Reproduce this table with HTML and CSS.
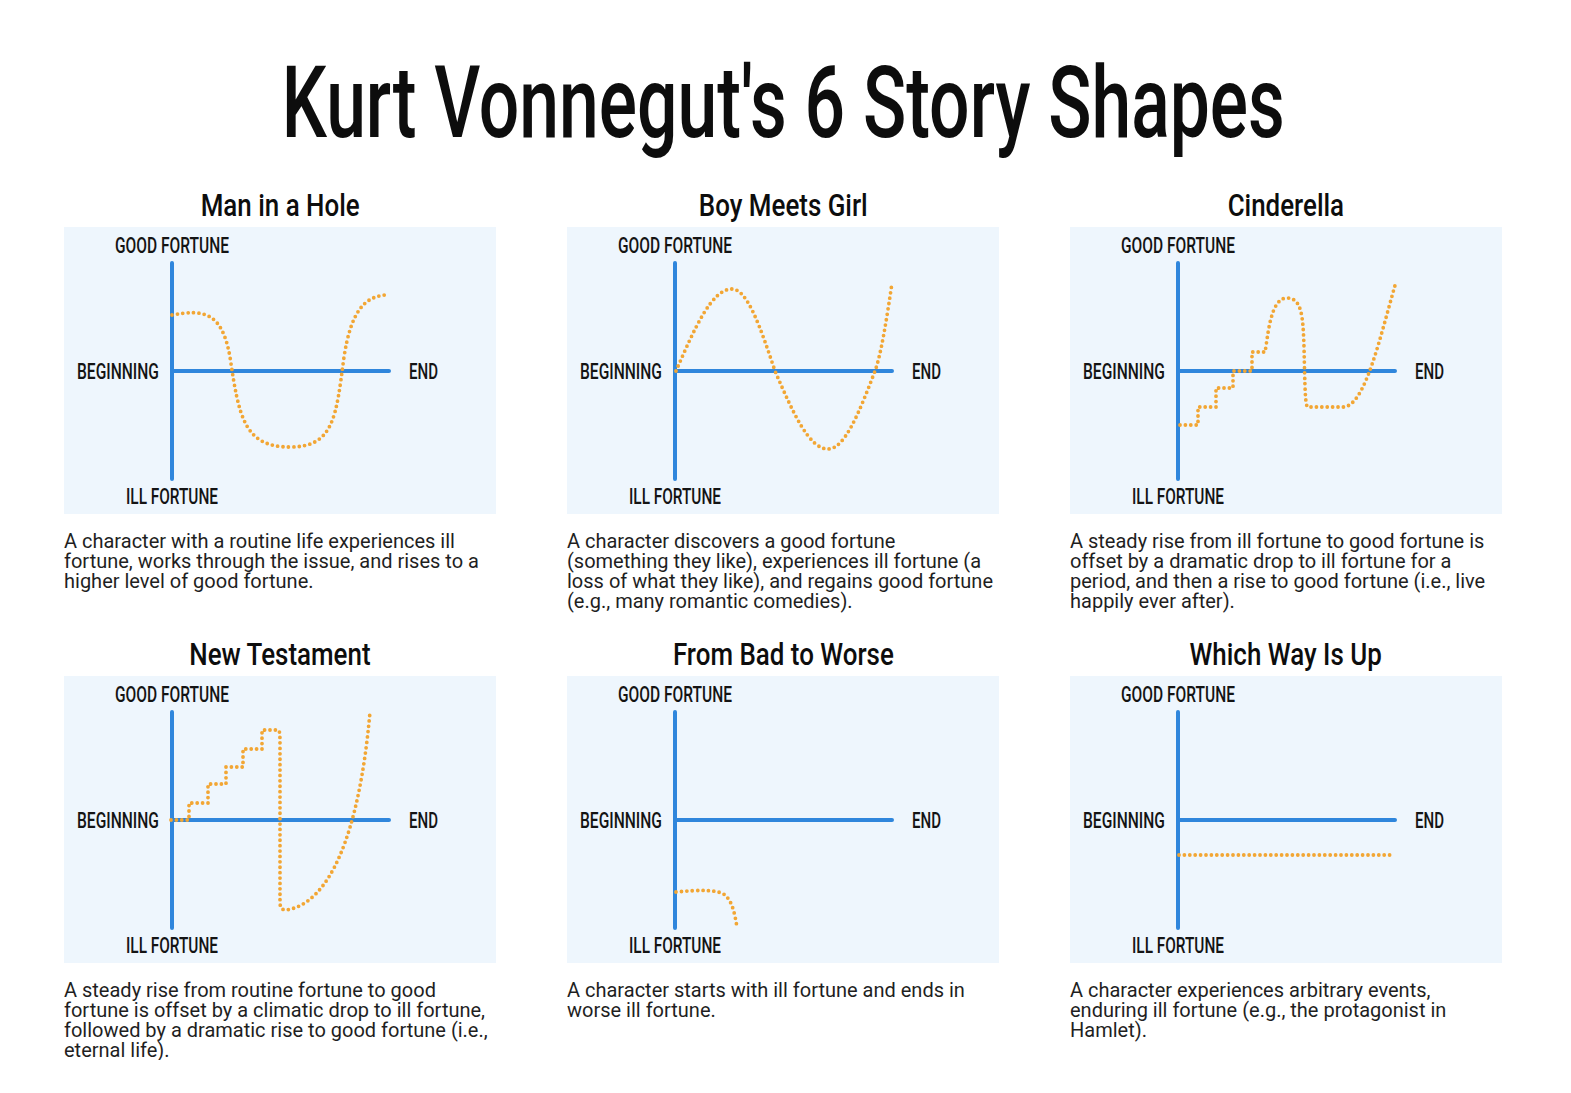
FILE: index.html
```html
<!DOCTYPE html>
<html lang="en">
<head>
<meta charset="utf-8">
<title>Kurt Vonnegut's 6 Story Shapes</title>
<link rel="stylesheet" href="styles.css">
</head>
<body>
<main class="page">
  <h1 class="title"><span>Kurt Vonnegut's 6 Story Shapes</span></h1>
  <section class="grid">

    <article class="card">
      <h2 class="card-title"><span>Man in a Hole</span></h2>
      <div class="chart">
        <svg width="432" height="287" viewBox="0 0 432 287">
          <text class="lbl" x="51" y="26" textLength="114" lengthAdjust="spacingAndGlyphs">GOOD FORTUNE</text>
          <text class="lbl" x="13" y="152" textLength="82" lengthAdjust="spacingAndGlyphs">BEGINNING</text>
          <text class="lbl" x="345" y="152" textLength="29" lengthAdjust="spacingAndGlyphs">END</text>
          <text class="lbl" x="62" y="277" textLength="92" lengthAdjust="spacingAndGlyphs">ILL FORTUNE</text>
          <path class="axis" d="M108,36 V252 M108,144 H325"/>
          <path class="curve" d="M108,88 C140,82 158,85 166,130 C175,190 180,220 226,220 C270,220 272,190 280,130 C287,85 300,70 321,68"/>
        </svg>
      </div>
      <p class="desc">A character with a routine life experiences ill fortune, works through the issue, and rises to a higher level of good fortune.</p>
    </article>

    <article class="card">
      <h2 class="card-title"><span>Boy Meets Girl</span></h2>
      <div class="chart">
        <svg width="432" height="287" viewBox="0 0 432 287">
          <text class="lbl" x="51" y="26" textLength="114" lengthAdjust="spacingAndGlyphs">GOOD FORTUNE</text>
          <text class="lbl" x="13" y="152" textLength="82" lengthAdjust="spacingAndGlyphs">BEGINNING</text>
          <text class="lbl" x="345" y="152" textLength="29" lengthAdjust="spacingAndGlyphs">END</text>
          <text class="lbl" x="62" y="277" textLength="92" lengthAdjust="spacingAndGlyphs">ILL FORTUNE</text>
          <path class="axis" d="M108,36 V252 M108,144 H325"/>
          <path class="curve" d="M109,144 C127.7,100.9 144.8,62 165,62 C180.5,62 193.6,100.9 208,144 C225.7,185 241.9,222 261,222 C277.9,222 292.3,185 308,144 C314,128 320,90 325,56"/>
        </svg>
      </div>
      <p class="desc">A character discovers a good fortune (something they like), experiences ill fortune (a loss of what they like), and regains good fortune (e.g., many romantic comedies).</p>
    </article>

    <article class="card">
      <h2 class="card-title"><span>Cinderella</span></h2>
      <div class="chart">
        <svg width="432" height="287" viewBox="0 0 432 287">
          <text class="lbl" x="51" y="26" textLength="114" lengthAdjust="spacingAndGlyphs">GOOD FORTUNE</text>
          <text class="lbl" x="13" y="152" textLength="82" lengthAdjust="spacingAndGlyphs">BEGINNING</text>
          <text class="lbl" x="345" y="152" textLength="29" lengthAdjust="spacingAndGlyphs">END</text>
          <text class="lbl" x="62" y="277" textLength="92" lengthAdjust="spacingAndGlyphs">ILL FORTUNE</text>
          <path class="axis" d="M108,36 V252 M108,144 H325"/>
          <path class="curve" d="M110,198 H128 V180 H146 V161 H163 V144 H182 V125 H195 C198,110 200,71 217,71 C232,71 233,90 234,120 C235,160 235,180 238,180 H273 C295,180 310,110 326,55"/>
        </svg>
      </div>
      <p class="desc">A steady rise from ill fortune to good fortune is offset by a dramatic drop to ill fortune for a period, and then a rise to good fortune (i.e., live happily ever after).</p>
    </article>

    <article class="card">
      <h2 class="card-title"><span>New Testament</span></h2>
      <div class="chart">
        <svg width="432" height="287" viewBox="0 0 432 287">
          <text class="lbl" x="51" y="26" textLength="114" lengthAdjust="spacingAndGlyphs">GOOD FORTUNE</text>
          <text class="lbl" x="13" y="152" textLength="82" lengthAdjust="spacingAndGlyphs">BEGINNING</text>
          <text class="lbl" x="345" y="152" textLength="29" lengthAdjust="spacingAndGlyphs">END</text>
          <text class="lbl" x="62" y="277" textLength="92" lengthAdjust="spacingAndGlyphs">ILL FORTUNE</text>
          <path class="axis" d="M108,36 V252 M108,144 H325"/>
          <path class="curve" d="M107,144 H125 V127 H144 V108 H162 V91 H179 V73 H198 V54 H214 C216,54 216,60 216,70 V226 C216,232 218,234 222,234 C265,228 295,160 306,36"/>
        </svg>
      </div>
      <p class="desc">A steady rise from routine fortune to good fortune is offset by a climatic drop to ill fortune, followed by a dramatic rise to good fortune (i.e., eternal life).</p>
    </article>

    <article class="card">
      <h2 class="card-title"><span>From Bad to Worse</span></h2>
      <div class="chart">
        <svg width="432" height="287" viewBox="0 0 432 287">
          <text class="lbl" x="51" y="26" textLength="114" lengthAdjust="spacingAndGlyphs">GOOD FORTUNE</text>
          <text class="lbl" x="13" y="152" textLength="82" lengthAdjust="spacingAndGlyphs">BEGINNING</text>
          <text class="lbl" x="345" y="152" textLength="29" lengthAdjust="spacingAndGlyphs">END</text>
          <text class="lbl" x="62" y="277" textLength="92" lengthAdjust="spacingAndGlyphs">ILL FORTUNE</text>
          <path class="axis" d="M108,36 V252 M108,144 H325"/>
          <path class="curve" d="M109,216 C130,214 150,213 158,219 C166,226 168,240 170,251"/>
        </svg>
      </div>
      <p class="desc">A character starts with ill fortune and ends in worse ill fortune.</p>
    </article>

    <article class="card">
      <h2 class="card-title"><span>Which Way Is Up</span></h2>
      <div class="chart">
        <svg width="432" height="287" viewBox="0 0 432 287">
          <text class="lbl" x="51" y="26" textLength="114" lengthAdjust="spacingAndGlyphs">GOOD FORTUNE</text>
          <text class="lbl" x="13" y="152" textLength="82" lengthAdjust="spacingAndGlyphs">BEGINNING</text>
          <text class="lbl" x="345" y="152" textLength="29" lengthAdjust="spacingAndGlyphs">END</text>
          <text class="lbl" x="62" y="277" textLength="92" lengthAdjust="spacingAndGlyphs">ILL FORTUNE</text>
          <path class="axis" d="M108,36 V252 M108,144 H325"/>
          <path class="curve" d="M109,179 H323"/>
        </svg>
      </div>
      <p class="desc">A character experiences arbitrary events, enduring ill fortune (e.g., the protagonist in Hamlet).</p>
    </article>

  </section>
</main>
</body>
</html>
```

FILE: styles.css
```css
* { box-sizing: border-box; }

body {
  margin: 0;
  background: #ffffff;
  font-family: Roboto, "Liberation Sans", sans-serif;
  color: #1f1f1f;
}

.page {
  padding: 52px 68px 0 64px;
}

.title {
  margin: 0;
  font-size: 101px;
  line-height: 101px;
  font-weight: 500;
  text-align: center;
  color: #0d0d0d;
}

.title span {
  display: inline-block;
  transform: scaleX(0.707);
  white-space: nowrap;
}

.grid {
  display: grid;
  grid-template-columns: repeat(3, 432px);
  column-gap: 71px;
  row-gap: 27px;
  margin-top: 36px;
  align-items: start;
}

.card-title {
  margin: 0 0 6px;
  font-size: 32px;
  line-height: 32px;
  font-weight: 500;
  text-align: center;
  color: #0d0d0d;
}

.card-title span {
  display: inline-block;
  transform: scaleX(0.81);
  white-space: nowrap;
}

.chart {
  background: #eef6fd;
  height: 287px;
}

.chart svg {
  display: block;
}

.lbl {
  font-family: Roboto, "Liberation Sans", sans-serif;
  font-size: 22.5px;
  font-weight: 500;
  fill: #141414;
}

.axis {
  fill: none;
  stroke: #2f86dc;
  stroke-width: 4;
  stroke-linecap: round;
}

.curve {
  fill: none;
  stroke: #f2a634;
  stroke-width: 3.8;
  stroke-linecap: round;
  stroke-linejoin: round;
  stroke-dasharray: 0 5.4;
}

.desc {
  margin: 17px 0 0;
  padding-right: 4px;
  font-size: 20px;
  line-height: 20px;
}
```
